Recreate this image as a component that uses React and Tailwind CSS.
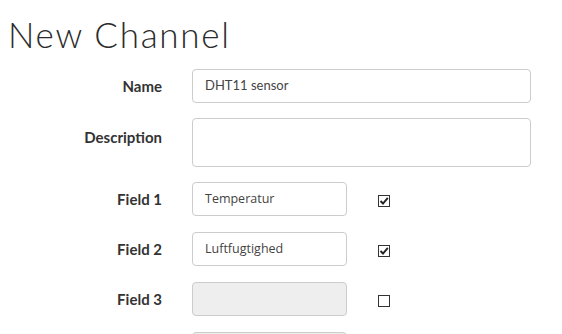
import React from 'react';

const Check = ({ checked }) => (
  <span className="w-[12px] h-[12px] border border-[#333] bg-white flex items-center justify-center">
    {checked && (
      <svg width="10" height="10" viewBox="0 0 10 10">
        <path d="M1.5 5 L4 7.5 L8.8 1.8" fill="none" stroke="#222" strokeWidth="1.9" />
      </svg>
    )}
  </span>
);

const fields = [
  { label: 'Field 1', value: 'Temperatur', checked: true },
  { label: 'Field 2', value: 'Luftfugtighed', checked: true },
  { label: 'Field 3', value: '', checked: false, disabled: true },
  { label: 'Field 4', value: '', checked: false, disabled: true },
];

export default function App() {
  return (
    <div className="w-[562px] h-[334px] overflow-hidden bg-white text-[#333]">
      <h1 className="pl-[8px] pt-[13px] h-[69px] text-[35px] leading-[42px] font-light tracking-[1.7px] text-[#2b2b2b] font-['Lato',sans-serif]">
        New Channel
      </h1>
      <div className="flex flex-col gap-[15px]">
        <div className="flex items-center h-[34px]">
          <div className="w-[162px] text-right text-[15px] font-bold font-['Lato',sans-serif]">Name</div>
          <div className="ml-[30px] w-[339px] h-[34px] border border-[#ccc] rounded-[4px] px-[12px] flex items-center text-[13px] text-[#444] font-['Lato',sans-serif]">
            DHT11 sensor
          </div>
        </div>
        <div className="flex items-start h-[49px]">
          <div className="w-[162px] pt-[8px] text-right text-[15px] font-bold font-['Lato',sans-serif]">Description</div>
          <div className="ml-[30px] w-[339px] h-[49px] border border-[#ccc] rounded-[4px]" />
        </div>
        <div className="flex flex-col gap-[16px]">
          {fields.map((f) => (
            <div key={f.label} className="flex items-center h-[34px]">
              <div className="w-[162px] text-right text-[15px] font-bold font-['Lato',sans-serif]">{f.label}</div>
              <div
                className={`ml-[30px] w-[155px] h-[34px] border border-[#ccc] rounded-[4px] px-[12px] flex items-center text-[12.5px] text-[#444] font-['Open_Sans',sans-serif] ${f.disabled ? 'bg-[#eee]' : 'bg-white'}`}
              >
                {f.value}
              </div>
              <div className="ml-[31px] mt-[3px]">
                <Check checked={f.checked} />
              </div>
            </div>
          ))}
        </div>
      </div>
    </div>
  );
}
